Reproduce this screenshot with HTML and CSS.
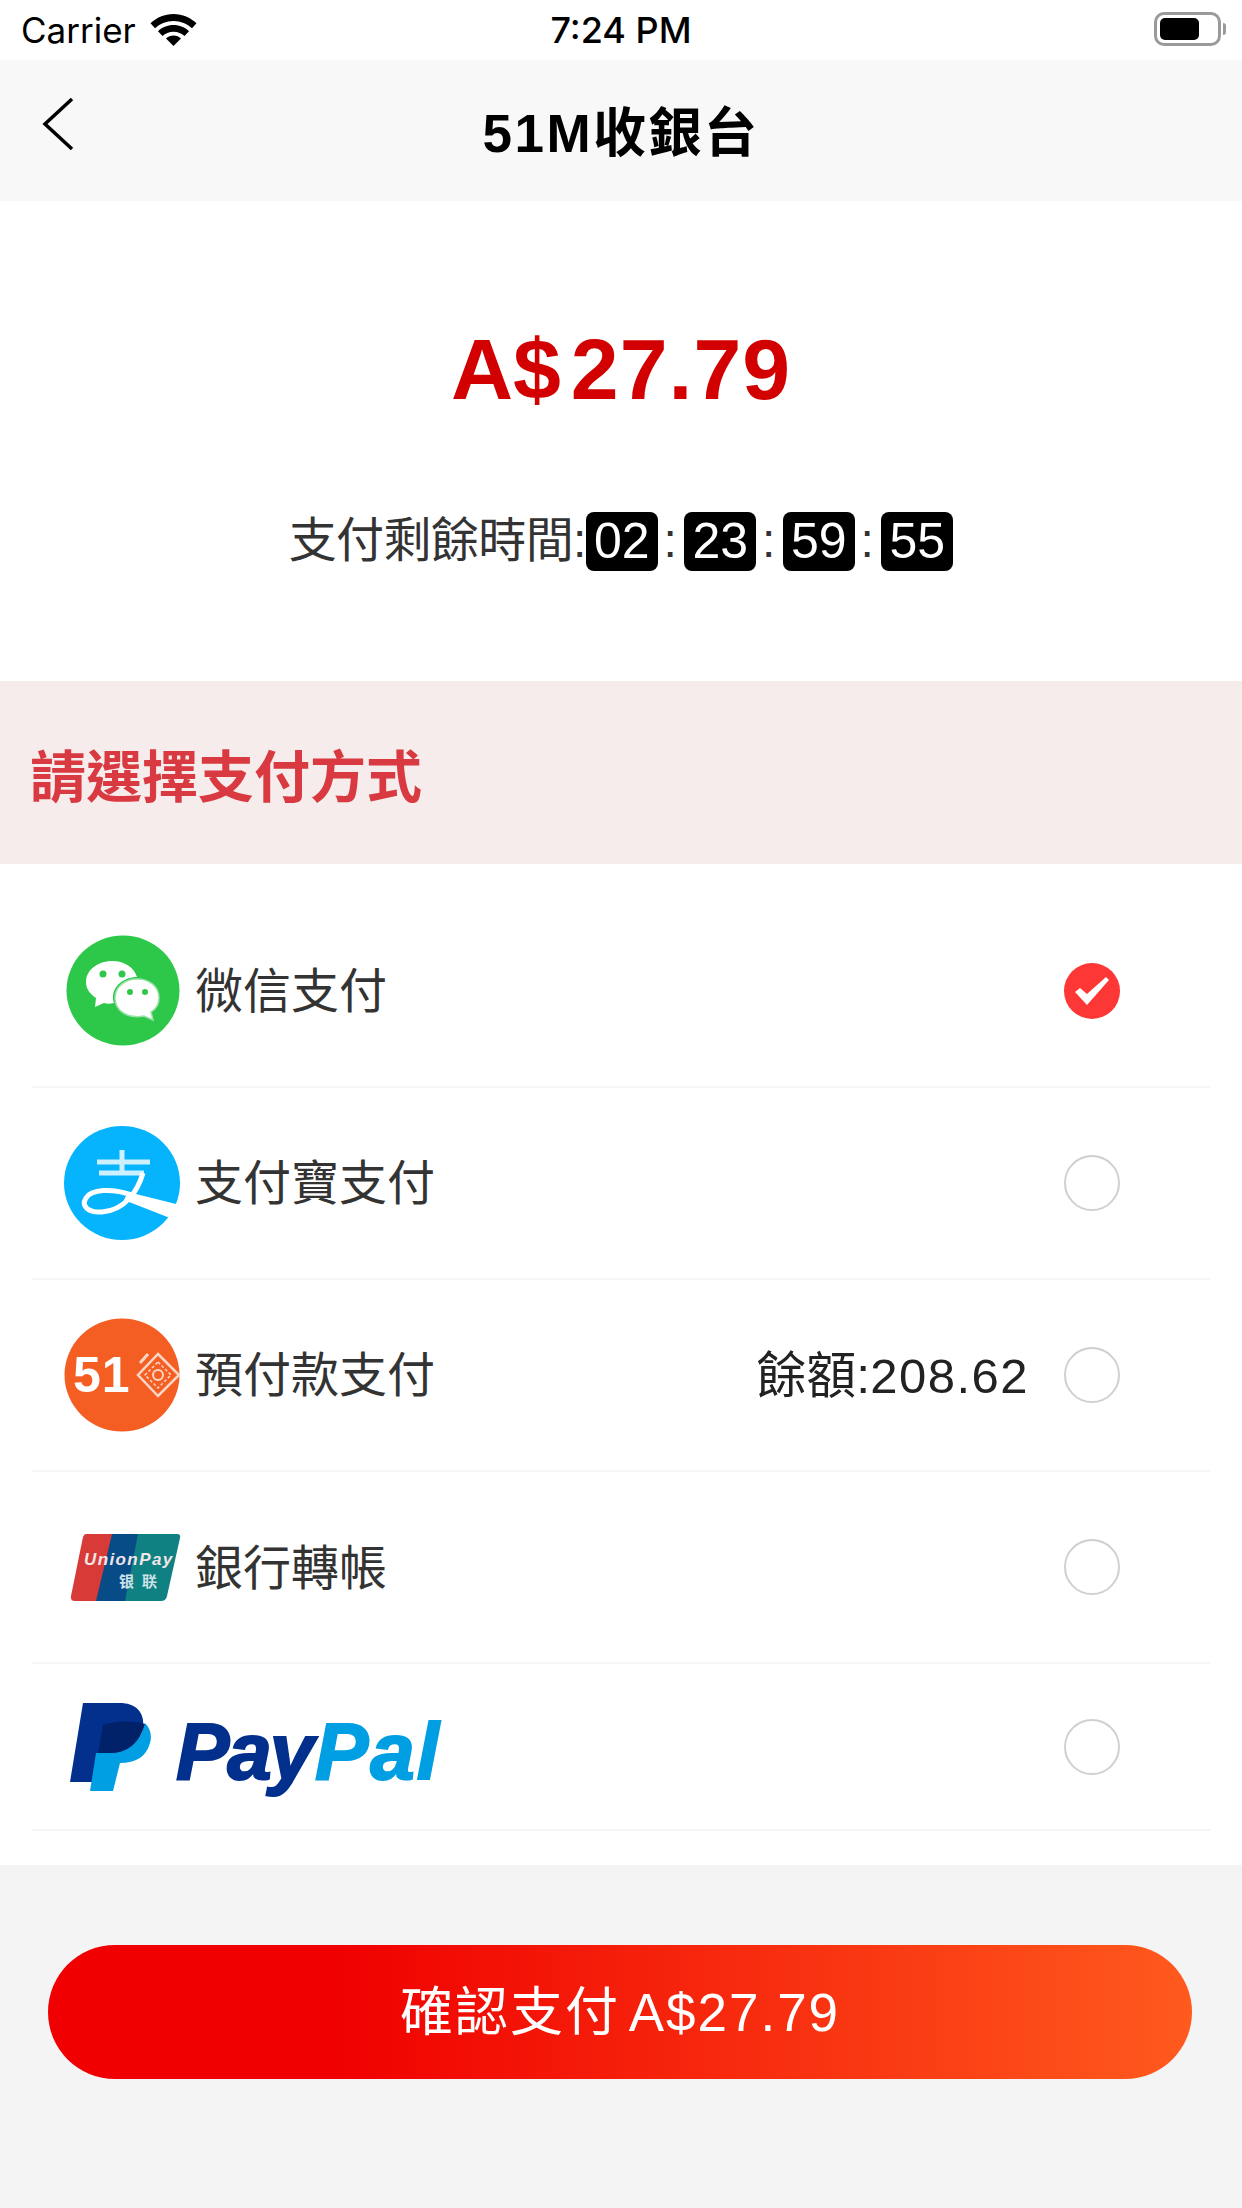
FILE: index.html
```html
<!DOCTYPE html>
<html lang="zh-Hant">
<head>
<meta charset="utf-8">
<title>51M收銀台</title>
<link rel="stylesheet" href="styles.css">
</head>
<body>
<div class="page">
  <header class="status">
    <div class="status-left">
      <span class="carrier">Carrier</span>
      <svg class="wifi" width="47" height="32" viewBox="0 0 47 32"><path d="M23.5 0C14.5 0 6.5 3.500 0.500 9.300L5 14.300C9.800 9.700 16.300 6.900 23.500 6.900S37.200 9.700 42 14.300L46.500 9.300C40.500 3.500 32.500 0 23.500 0Z"/><path d="M23.500 11C17.500 11 12 13.300 8 17.200L12.500 22.100C15.300 19.400 19.200 17.800 23.500 17.800S31.700 19.400 34.500 22.100L39 17.200C35 13.300 29.500 11 23.500 11Z"/><path d="M23.500 21.500C20.600 21.500 18 22.600 16 24.500L23.500 32L31 24.500C29 22.600 26.400 21.500 23.500 21.500Z"/></svg>
    </div>
    <span class="time">7:24 PM</span>
    <div class="battery"><span class="battery-body"><span class="battery-fill"></span></span><span class="battery-cap"></span></div>
  </header>

  <nav class="nav">
    <svg class="back" width="36" height="54" viewBox="0 0 36 54"><path d="M33 2L6 27L33 52" fill="none" stroke="#000" stroke-width="3.500"/></svg>
    <h1 class="title">51M收銀台</h1>
  </nav>

  <section class="hero">
    <div class="amount"><span class="cur">A$</span>27.79</div>
    <div class="timer">
      <span class="timer-label">支付剩餘時間:</span>
      <span class="digits">02</span><span class="colon">:</span>
      <span class="digits">23</span><span class="colon">:</span>
      <span class="digits">59</span><span class="colon">:</span>
      <span class="digits">55</span>
    </div>
  </section>

  <div class="section-head">請選擇支付方式</div>

  <section class="list">
    <div class="row row-a">
      <svg class="logo logo-wechat" width="114" height="112" viewBox="0 0 114 112">
        <ellipse cx="57" cy="55.500" rx="56.500" ry="55" fill="#2dc84a"/>
        <path d="M20 47C20 35 32 26 46 26C58 26 68 32 71 42C58 42 47 51 47 62C47 64 47 66 48 68C44 69 41 69 38 68L29 72L30 63C24 59 20 54 20 47Z" fill="#fff"/>
        <circle cx="37" cy="39" r="3.500" fill="#2dc84a"/><circle cx="56" cy="39" r="3.500" fill="#2dc84a"/>
        <path d="M49 63C49 52 59 44 71 44C84 44 93 52 93 63C93 69 90 74 85 77L87 85L78 81C62 84 49 76 49 63Z" fill="#fff" stroke="#9de3aa" stroke-width="1.500"/>
        <circle cx="64" cy="57" r="3" fill="#2dc84a"/><circle cx="79" cy="57" r="3" fill="#2dc84a"/>
      </svg>
      <span class="label">微信支付</span>
      <span class="radio radio-on"><svg width="34" height="28" viewBox="0 0 34 28"><path d="M0 15L5 11L12 17L31 0L34 3L12 28Z" fill="#fff"/></svg></span>
    </div>
    <div class="row row-a">
      <svg class="logo logo-ali" width="116" height="114" viewBox="0 0 116 114">
        <ellipse cx="58" cy="57" rx="58" ry="57" fill="#06b4fd"/>
        <g fill="none" stroke="#fff">
          <path d="M33 36H86M35 47H80M58 24V47" stroke-width="5" stroke-opacity=".8"/>
          <path d="M79 47C74 64 62 84 38 86C24 87 17 80 22 72C27 63 48 62 68 69" stroke-width="5"/>
        </g>
        <path d="M64 66L116 79L114 86L106 92L60 74Z" fill="#fff"/>
      </svg>
      <span class="label">支付寶支付</span>
      <span class="radio"></span>
    </div>
    <div class="row row-a">
      <svg class="logo logo-51" width="116" height="114" viewBox="0 0 116 114">
        <ellipse cx="58" cy="57" rx="57.500" ry="56.500" fill="#f45e23"/>
        <text x="9" y="74" class="logo-51-text">51</text>
        <g fill="none" stroke="#fcd6c4" stroke-width="2.500">
          <path d="M94 36L115 57L94 78L74 57Z"/><path d="M84 36L76 45" stroke-width="3"/>
          <path d="M94 44L107 57L94 70L81 57Z" stroke-width="1.500" stroke-dasharray="3 2"/>
          <circle cx="94" cy="57" r="5" stroke-width="2"/>
        </g>
      </svg>
      <span class="label">預付款支付</span>
      <span class="balance">餘額:<span class="balance-num">208.62</span></span>
      <span class="radio"></span>
    </div>
    <div class="row row-b">
      <svg class="logo logo-up" width="111" height="67" viewBox="0 0 111 67">
        <path d="M16 0H44L27 67H5Q0 67 1 62L13 3Q14 0 16 0Z" fill="#d83a38"/>
        <path d="M42 0H70L57 67H26Z" fill="#074c86"/>
        <path d="M68 0H107Q111 0 110 4L97 62Q96 67 91 67H55Z" fill="#0f8183"/>
        <text x="14" y="31" class="up-en">UnionPay</text>
        <text x="49" y="53" class="up-zh">银联</text>
      </svg>
      <span class="label">銀行轉帳</span>
      <span class="radio"></span>
    </div>
    <div class="row row-c">
      <svg class="logo logo-pp" width="386" height="94" viewBox="0 0 386 94">
        <path d="M13 0H50C66 0 75 10 73 24C69 44 55 52 38 52H28L22 79H0Z" fill="#02308c"/>
        <path d="M26 50H40C58 50 70 40 75 20C81 26 82 34 80 40C76 54 66 60 50 60L43 88H20Z" fill="#009ee3"/>
        <path d="M33 22C45 18 62 17 75 21C70 38 58 50 40 50H28Z" fill="#012169"/>
        <text x="106" y="76" class="pp-text pp-dark">Pay</text>
        <text x="245" y="76" class="pp-text pp-light">Pal</text>
      </svg>
      <span class="radio"></span>
    </div>
  </section>

  <footer class="foot">
    <button class="pay">確認支付 A$27.79</button>
  </footer>
</div>
</body>
</html>
```
FILE: styles.css
```css
* { box-sizing: border-box; }
html, body { margin: 0; padding: 0; }
body {
  width: 1242px;
  height: 2208px;
  overflow: hidden;
  background: #f4f4f4;
  color: #333;
  font-family: "Liberation Sans", "Noto Sans CJK TC", sans-serif;
}
.page { display: flex; flex-direction: column; height: 2208px; }

.status {
  height: 60px;
  background: #fff;
  display: grid;
  grid-template-columns: 1fr auto 1fr;
  align-items: center;
  padding: 0 16px 0 21px;
  color: #000;
  font-family: Inter, sans-serif;
}
.status-left { display: flex; align-items: center; gap: 14px; }
.carrier { font-size: 35px; }
.time { font-size: 36px; font-weight: 500; margin-right: 5px; }
.battery { justify-self: end; display: flex; align-items: center; gap: 2px; margin-top: -2px; }
.battery-body {
  width: 67px; height: 34px;
  border: 3px solid #9a9a9a;
  border-radius: 10px;
  padding: 3px;
  display: flex;
}
.battery-fill { width: 39px; background: #000; border-radius: 5px; }
.battery-cap { width: 3px; height: 12px; background: #9a9a9a; border-radius: 0 3px 3px 0; }

.nav {
  height: 141px;
  background: #f8f8f8;
  position: relative;
  display: flex;
  justify-content: center;
  align-items: center;
  padding-bottom: 4px;
}
.back { position: absolute; left: 39px; top: 37px; }
.title {
  margin: 0;
  font-size: 53px;
  font-weight: 700;
  color: #000;
  letter-spacing: 2.500px;
  font-family: "Liberation Sans", "Noto Sans CJK TC", sans-serif;
}

.hero {
  height: 480px;
  background: #fff;
  display: flex;
  flex-direction: column;
  align-items: center;
}
.amount {
  margin-top: 125px;
  font-size: 86px;
  line-height: 86px;
  font-weight: 700;
  color: #d20000;
  letter-spacing: 1px;
}
.cur { margin-right: 10px; letter-spacing: 0; }
.timer {
  margin-top: 99px;
  display: flex;
  align-items: center;
  font-size: 48px;
  color: #333;
}
.timer-label { line-height: 60px; letter-spacing: -0.6px; }
.digits {
  width: 72px;
  height: 59px;
  background: #000;
  color: #fff;
  border-radius: 8px;
  display: flex;
  align-items: center;
  justify-content: center;
  font-size: 50px;
  font-family: "Liberation Sans", sans-serif;
}
.colon { width: 26.500px; padding-right: 2px; text-align: center; line-height: 52px; }

.section-head {
  height: 183px;
  background: #f5eceb;
  padding-left: 30px;
  display: flex;
  align-items: center;
  font-size: 56px;
  font-weight: 700;
  color: #d93a41;
}

.list {
  height: 1001px;
  background: #fff;
  padding: 32px 32px 0;
  display: flex;
  flex-direction: column;
}
.row {
  display: flex;
  align-items: center;
  border-bottom: 2px solid #f5f5f5;
  padding-left: 32px;
  padding-right: 90px;
  flex: none;
}
.row-a { height: 192px; }
.row-b { height: 192px; }
.row-c { height: 167px; }
.logo { flex: none; }
.logo-wechat { margin-left: 2px; }
.logo-up { margin-left: 6px; }
.logo-pp { margin: 6px 0 0 6px; }
.label { margin: 0 0 8px 15px; font-size: 48px; color: #333; }
.logo-up + .label { margin: 0 0 6px 14px; }
.balance { margin: 0 35px 8px auto; font-size: 50px; color: #222; }
.balance-num { font-size: 49px; letter-spacing: 1.500px; }
.radio {
  width: 56px;
  height: 56px;
  border: 2px solid #d0d0d4;
  border-radius: 50%;
  margin-left: auto;
  flex: none;
}
.balance + .radio { margin-left: 0; }
.radio-on {
  background: #fd3636;
  border: 0;
  display: flex;
  align-items: center;
  justify-content: center;
}
.logo-51-text { font: 700 50px "Liberation Sans", sans-serif; letter-spacing: 1px; fill: #fff; }
.up-en { font: italic 700 17px "Liberation Sans", sans-serif; letter-spacing: 1.400px; fill: #f0e6e6; }
.up-zh { font: 700 15px "Noto Sans CJK SC", sans-serif; letter-spacing: 8px; fill: #cfe3ea; }
.pp-text { font: italic 700 80px "Liberation Sans", sans-serif; stroke-width: 2px; }
.pp-dark { fill: #02308c; stroke: #02308c; letter-spacing: -2px; }
.pp-light { fill: #009ee3; stroke: #009ee3; letter-spacing: 2px; }

.foot {
  flex: 1;
  background: #f4f4f4;
  padding: 80px 50px 0 48px;
}
.pay {
  display: block;
  width: 100%;
  height: 134px;
  border: 0;
  border-radius: 67px;
  background: linear-gradient(90deg, #f00000 0%, #f00000 25%, #ff5a1e 100%);
  color: #fff;
  font-family: "Liberation Sans", "Noto Sans CJK TC", sans-serif;
  font-size: 53px;
  letter-spacing: 2px;
  word-spacing: -8px;
  padding: 0 0 9px;
}
```
